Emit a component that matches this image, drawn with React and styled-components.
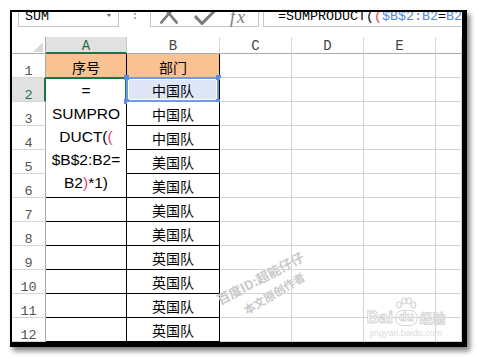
import React from "react";
import styled, { createGlobalStyle } from "styled-components";

const GRID = "#d4d4d4";
const HEAD_LINE = "#ababab";
const GREEN = "#217346";
const MONO = `"Liberation Mono", "DejaVu Sans Mono", monospace`;
const CJK = `"Noto Sans CJK SC", "Noto Sans", sans-serif`;
const SANS = `"Liberation Sans", Arial, sans-serif`;

const GlobalStyle = createGlobalStyle`
  html, body { margin: 0; padding: 0; background: #fff; }
  body { font-family: ${SANS}; }
  * { box-sizing: border-box; }
`;

const Page = styled.div`
  width: 477px;
  height: 357px;
  padding: 10px;
  overflow: hidden;
`;

const Frame = styled.div`
  position: relative;
  width: 457px;
  height: 337px;
  border: solid #000;
  border-width: 2px 5px 5px 2px;
  box-shadow: 3px 4px 5px rgba(0, 0, 0, 0.5);
  background: #fff;
  display: flex;
  flex-direction: column;
  overflow: hidden;
`;

/* ---------- formula bar ---------- */
const FormulaBar = styled.div`
  flex: none;
  height: 15px;
  margin-bottom: 10px;
  display: flex;
  align-items: flex-end;
  overflow: hidden;
  padding-left: 6px;
`;

const NameBox = styled.div`
  flex: none;
  width: 101px;
  height: 22px;
  border: 1px solid #c6c6c6;
  display: flex;
  align-items: center;
  padding: 1px 7px 0 6px;
  font: 13.33px ${MONO};
  color: #000;
`;

const DropArrow = styled.span`
  margin-left: auto;
  margin-top: -2px;
  width: 0;
  height: 0;
  border-left: 2.5px solid transparent;
  border-right: 2.5px solid transparent;
  border-top: 3px solid #666;
`;

const Grip = styled.span`
  flex: none;
  width: 2px;
  height: 2px;
  margin: 0 14px 8px 15px;
  background: #b0b0b0;
  box-shadow: 0 -4px 0 #b0b0b0, 0 -8px 0 #b0b0b0;
`;

const ButtonsBox = styled.div`
  flex: none;
  width: 109px;
  height: 22px;
  border: 1px solid #c6c6c6;
  display: flex;
  align-items: flex-end;
  padding-left: 9px;
`;

const CancelIcon = styled.svg`
  flex: none;
  margin-bottom: 2px;
`;

const EnterIcon = styled.svg`
  flex: none;
  margin-left: 16px;
  margin-bottom: 1px;
`;

const FxLabel = styled.span`
  flex: none;
  margin-left: 13px;
  font: italic 18px "Liberation Serif", serif;
  letter-spacing: 2px;
  line-height: 1;
  color: #7b7b7b;
`;

const FormulaInput = styled.div`
  flex: 1;
  min-width: 0;
  height: 22px;
  margin-left: 4px;
  border-left: 1px solid #c6c6c6;
  border-bottom: 1px solid #c6c6c6;
  display: flex;
  align-items: center;
  padding: 1px 0 0 14px;
  font: 13.33px ${MONO};
  white-space: nowrap;
  overflow: hidden;
  color: #000;
`;

const Token = styled.span`
  color: ${(p) => p.$color || "inherit"};
`;

/* ---------- sheet ---------- */
const Sheet = styled.div`
  flex: 1;
  display: grid;
  grid-template-columns: 34px 81px 93px 72px 72px 72px 1fr;
  grid-template-rows: 17px repeat(12, 1fr);
`;

const Corner = styled.div`
  border-right: 1px solid ${HEAD_LINE};
  border-bottom: 1px solid ${HEAD_LINE};
  display: flex;
  align-items: flex-end;
  justify-content: flex-end;
  padding: 0 2px 1px 0;
`;

const CornerTriangle = styled.span`
  width: 0;
  height: 0;
  border-left: 10px solid transparent;
  border-bottom: 10px solid #dadada;
`;

const ColHeader = styled.div`
  background: ${(p) => (p.$active ? "#e1e1e1" : "#fff")};
  color: ${(p) => (p.$active ? GREEN : "#444")};
  border-right: 1px solid ${(p) => (p.$active ? "#c6c6c6" : "#d5d5d5")};
  border-bottom: ${(p) => (p.$active ? `2px solid ${GREEN}` : `1px solid ${HEAD_LINE}`)};
  display: flex;
  align-items: center;
  justify-content: center;
  font: 14px ${MONO};
  padding-top: ${(p) => (p.$active ? "3px" : "2px")};
`;

const RowHeader = styled.div`
  background: ${(p) => (p.$active ? "#e1e1e1" : "#fff")};
  color: ${(p) => (p.$active ? GREEN : "#555")};
  border-right: ${(p) => (p.$active ? `2px solid ${GREEN}` : `1px solid ${HEAD_LINE}`)};
  border-bottom: 1px solid #d5d5d5;
  display: flex;
  align-items: flex-end;
  justify-content: center;
  font: 13.5px ${MONO};
  line-height: 10px;
  padding-left: ${(p) => (p.$active ? "1px" : "0")};
`;

const Cell = styled.div`
  position: relative;
  border-right: 1px solid ${(p) => (p.$ruled ? "#000" : GRID)};
  border-bottom: 1px solid ${(p) => (p.$ruled ? "#000" : GRID)};
  background: ${(p) => p.$fill || "#fff"};
  display: flex;
  align-items: center;
  justify-content: center;
  font: 14px ${CJK};
  color: #000;
  padding-top: ${(p) => (p.$head ? "3px" : "1px")};
`;

const EditCell = styled.div`
  position: relative;
  grid-row: span 5;
  border-right: 1px solid #000;
  border-bottom: 1px solid #000;
  background: #fff;
  display: flex;
  flex-direction: column;
  align-items: center;
  padding-top: 1px;
  font: 15.5px ${SANS};
  line-height: 23px;
  color: #000;

  &::before {
    content: "";
    position: absolute;
    top: -1px;
    left: -1px;
    right: -1px;
    height: 25px;
    border-top: 2px solid ${GREEN};
    border-right: 2px solid ${GREEN};
  }
`;

const EditLine = styled.span`
  white-space: nowrap;
`;

const SelectionBox = styled.span`
  position: absolute;
  top: -1px;
  left: -1px;
  right: 0;
  bottom: -1px;
  border: 2px solid #6e9ae6;
  box-shadow: inset 0 0 0 1px #fff;
  pointer-events: none;
`;

const Handle = styled.span`
  position: absolute;
  width: 5px;
  height: 5px;
  background: #5b8de8;
  ${(p) => (p.$top ? "top: -3px;" : "bottom: -3px;")}
  ${(p) => (p.$left ? "left: -3px;" : "right: -2px;")}
`;

/* ---------- watermarks ---------- */
const Watermark = styled.span`
  position: absolute;
  left: ${(p) => p.$x}px;
  top: ${(p) => p.$y}px;
  transform: translate(-50%, -50%) rotate(${(p) => p.$angle}deg);
  font: bold ${(p) => p.$size}px ${CJK};
  color: #c9c9c9;
  white-space: nowrap;
  pointer-events: none;
  text-shadow: 0 0 1px #fff;
`;

const Logo = styled.div`
  position: absolute;
  left: 350px;
  top: 285px;
  width: 88px;
  display: flex;
  flex-direction: column;
  align-items: center;
  pointer-events: none;
`;

const LogoRow = styled.div`
  display: flex;
  align-items: flex-end;
  gap: 2px;
`;

const LogoWord = styled.span`
  font: bold 17px ${SANS};
  line-height: 16px;
  color: #fff;
  -webkit-text-stroke: 1px #d4d4d4;
`;

const LogoPaw = styled.div`
  display: flex;
  flex-direction: column;
  align-items: center;
`;

const LogoDu = styled.span`
  font: bold 12px ${SANS};
  line-height: 13px;
  padding: 0 3px 1px;
  border: 1.5px solid #d4d4d4;
  border-radius: 8px;
  color: #fff;
  -webkit-text-stroke: 0.8px #d4d4d4;
`;

const LogoJy = styled.span`
  font: bold 13px ${CJK};
  line-height: 16px;
  color: #fff;
  -webkit-text-stroke: 0.8px #d4d4d4;
`;

const LogoUrl = styled.span`
  font: 9px ${SANS};
  line-height: 10px;
  margin-top: 2px;
  color: #dcdcdc;
`;

const FILL_HEAD = "#f8c291";

const rows = [
  { n: 1, a: "序号", b: "部门", head: true },
  { n: 2, b: "中国队", active: true },
  { n: 3, b: "中国队" },
  { n: 4, b: "中国队" },
  { n: 5, b: "美国队" },
  { n: 6, b: "美国队" },
  { n: 7, b: "美国队" },
  { n: 8, b: "美国队" },
  { n: 9, b: "英国队" },
  { n: 10, b: "英国队" },
  { n: 11, b: "英国队" },
  { n: 12, b: "英国队" },
];

const cols = ["A", "B", "C", "D", "E", ""];

export default function App() {
  return (
    <Page>
      <GlobalStyle />
      <Frame>
        <FormulaBar>
          <NameBox>
            SUM
            <DropArrow />
          </NameBox>
          <Grip />
          <ButtonsBox>
            <CancelIcon width="18" height="21" viewBox="0 0 18 21">
              <path d="M0.5 0.5 L17.5 20.5 M17.5 0.5 L0.5 20.5" stroke="#7b7b7b" strokeWidth="2.6" fill="none" />
            </CancelIcon>
            <EnterIcon width="23" height="16" viewBox="0 0 23 16">
              <path d="M1 7 L8 14.5 L22 0.5" stroke="#7b7b7b" strokeWidth="3" fill="none" />
            </EnterIcon>
            <FxLabel>fx</FxLabel>
          </ButtonsBox>
          <FormulaInput>
            <Token>=SUMPRODUCT(</Token>
            <Token $color="#e2453c">(</Token>
            <Token $color="#4f86e8">$B$2:B2</Token>
            <Token>=</Token>
            <Token $color="#4f86e8">B2</Token>
          </FormulaInput>
        </FormulaBar>

        <Sheet>
          <Corner>
            <CornerTriangle />
          </Corner>
          {cols.map((c, i) => (
            <ColHeader key={i} $active={c === "A"}>
              {c}
            </ColHeader>
          ))}

          {rows.map((r) => (
            <React.Fragment key={r.n}>
              <RowHeader $active={r.active}>{r.n}</RowHeader>
              {r.n === 1 && (
                <Cell $ruled $head $fill={FILL_HEAD}>
                  {r.a}
                </Cell>
              )}
              {r.n === 2 && (
                <EditCell>
                  <EditLine>=</EditLine>
                  <EditLine>SUMPRO</EditLine>
                  <EditLine>
                    DUCT(<Token $color="#e8407a">(</Token>
                  </EditLine>
                  <EditLine>$B$2:B2=</EditLine>
                  <EditLine>
                    B2<Token $color="#e8407a">)</Token>*1)
                  </EditLine>
                </EditCell>
              )}
              {r.n >= 7 && <Cell $ruled />}
              {r.active ? (
                <Cell $ruled $fill="#dfe6f8">
                  {r.b}
                  <SelectionBox />
                  <Handle $top $left />
                  <Handle $top />
                  <Handle $left />
                  <Handle />
                </Cell>
              ) : (
                <Cell $ruled $head={r.head} $fill={r.head ? FILL_HEAD : undefined}>
                  {r.b}
                </Cell>
              )}
              <Cell />
              <Cell />
              <Cell />
              <Cell />
            </React.Fragment>
          ))}
        </Sheet>

        <Watermark $x={248} $y={266} $angle={-28} $size={13}>
          百度ID:超能仔仔
        </Watermark>
        <Watermark $x={262} $y={281} $angle={-31} $size={11.5}>
          本文原创作者
        </Watermark>

        <Logo>
          <LogoRow>
            <LogoWord>Bai</LogoWord>
            <LogoPaw>
              <svg width="22" height="13" viewBox="0 0 22 13">
                <g fill="#fff" stroke="#d4d4d4" strokeWidth="1.2">
                  <ellipse cx="4" cy="8" rx="2.3" ry="3" />
                  <ellipse cx="9" cy="4" rx="2.3" ry="3" />
                  <ellipse cx="14" cy="4" rx="2.3" ry="3" />
                  <ellipse cx="18.5" cy="8" rx="2.3" ry="3" />
                </g>
              </svg>
              <LogoDu>du</LogoDu>
            </LogoPaw>
            <LogoJy>经验</LogoJy>
          </LogoRow>
          <LogoUrl>jingyan.baidu.com</LogoUrl>
        </Logo>
      </Frame>
    </Page>
  );
}
